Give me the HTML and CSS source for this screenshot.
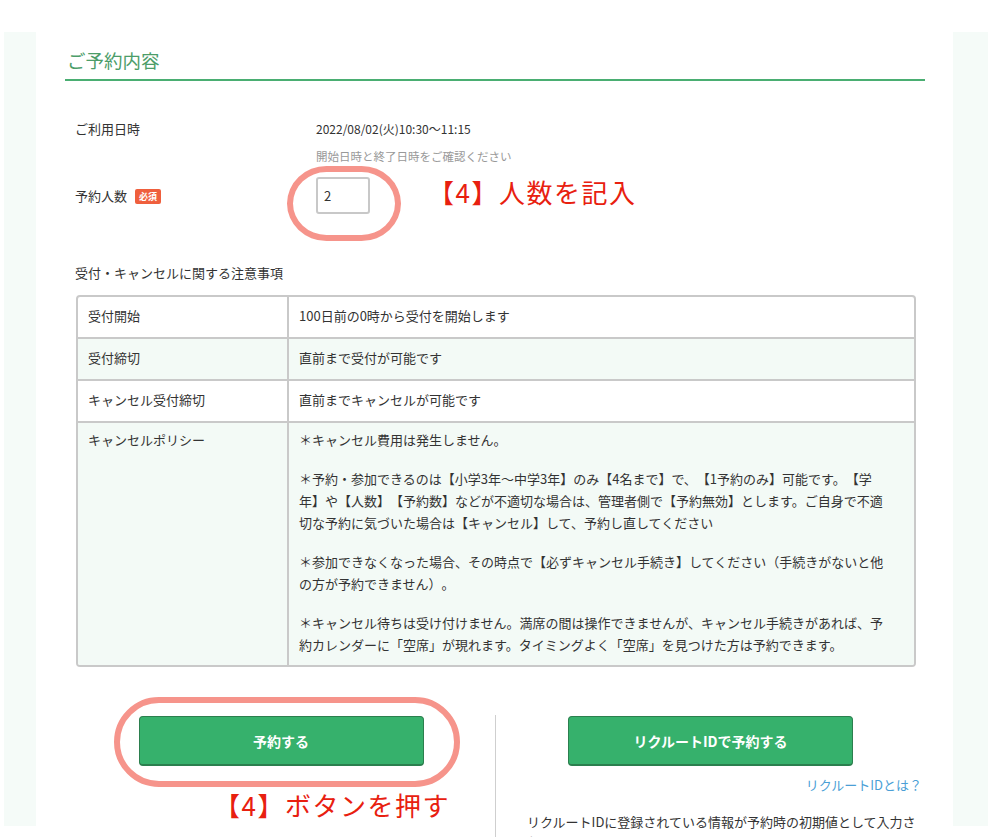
FILE: index.html
```html
<!DOCTYPE html>
<html lang="ja">
<head>
    <meta charset="UTF-8">
    <meta name="viewport" content="width=device-width, initial-scale=1.0">
    <title>ご予約内容</title>
    <link rel="stylesheet" href="styles.css">
</head>
<body>
    <div class="page">
        <div class="side"></div>
        <main class="main">
            <h2 class="heading">ご予約内容</h2>
            <div class="form">
                <div class="row row-date">
                    <div class="label">ご利用日時</div>
                    <div class="value">
                        <div class="date">2022/08/02(火)10:30〜11:15</div>
                        <div class="hint">開始日時と終了日時をご確認ください</div>
                    </div>
                </div>
                <div class="row row-count">
                    <div class="label">予約人数<span class="badge">必須</span></div>
                    <div class="value"><input class="count" type="text" value="2"></div>
                </div>
                <h3 class="notes-title">受付・キャンセルに関する注意事項</h3>
                <table class="notes">
                    <tr>
                        <td class="notes-label">受付開始</td>
                        <td>100日前の0時から受付を開始します</td>
                    </tr>
                    <tr class="alt">
                        <td class="notes-label">受付締切</td>
                        <td>直前まで受付が可能です</td>
                    </tr>
                    <tr>
                        <td class="notes-label">キャンセル受付締切</td>
                        <td>直前までキャンセルが可能です</td>
                    </tr>
                    <tr class="alt policy">
                        <td class="notes-label">キャンセルポリシー</td>
                        <td>
                            <p>＊キャンセル費用は発生しません。</p>
                            <p>＊予約・参加できるのは【小学3年〜中学3年】のみ【4名まで】で、【1予約のみ】可能です。【学<br>年】や【人数】【予約数】などが不適切な場合は、管理者側で【予約無効】とします。ご自身で不適<br>切な予約に気づいた場合は【キャンセル】して、予約し直してください</p>
                            <p>＊参加できなくなった場合、その時点で【必ずキャンセル手続き】してください（手続きがないと他<br>の方が予約できません）。</p>
                            <p>＊キャンセル待ちは受け付けません。満席の間は操作できませんが、キャンセル手続きがあれば、予<br>約カレンダーに「空席」が現れます。タイミングよく「空席」を見つけた方は予約できます。</p>
                        </td>
                    </tr>
                </table>
            </div>
            <div class="actions">
                <div class="action">
                    <button class="btn" type="button">予約する</button>
                </div>
                <div class="action action-id">
                    <button class="btn" type="button">リクルートIDで予約する</button>
                    <a class="what" href="#">リクルートIDとは？</a>
                    <p class="id-note">リクルートIDに登録されている情報が予約時の初期値として入力されます。</p>
                </div>
            </div>

            <!-- 説明用の書き込み -->
            <div class="mark mark-count"></div>
            <div class="memo memo-count">【4】人数を記入</div>
            <div class="mark mark-btn"></div>
            <div class="memo memo-btn">【4】ボタンを押す</div>
        </main>
        <div class="side side-right"></div>
    </div>
</body>
</html>
```

FILE: styles.css
```css
body {
    margin: 0;
    overflow: hidden;
    height: 100vh;
    background: #fff;
    font-family: "Noto Sans CJK JP", "Noto Sans", sans-serif;
    font-size: 13px;
    color: #333;
    text-spacing-trim: space-all;
}
.page {
    display: flex;
    align-items: flex-start;
    padding: 32px 0 0 4px;
}
.side {
    width: 32px;
    height: 794px;
    background-color: #f5fbf8;
}
.side-right {
    width: 35px;
}
.main {
    position: relative;
    width: 917px;
    box-sizing: border-box;
    padding: 0 28px 0 29px;
}

/* 見出し */
.heading {
    margin: 0;
    padding: 15px 0 6px 2px;
    font-size: 18.5px;
    font-weight: normal;
    line-height: 26px;
    color: #4c9d69;
    border-bottom: 2px solid #4aae72;
}

/* フォーム */
.form {
    padding: 0 10px;
    margin-top: 38px;
}
.row {
    display: flex;
}
.row .label {
    width: 241px;
    flex-shrink: 0;
    line-height: 20px;
}
.row-count {
    margin-top: 13px;
    align-items: center;
}
.date {
    font-size: 12px;
    line-height: 20px;
}
.hint {
    margin-top: 9px;
    font-size: 11.5px;
    line-height: 16px;
    color: #999;
}
.badge {
    display: inline-block;
    margin-left: 8px;
    padding: 0 4px;
    height: 15px;
    line-height: 15px;
    vertical-align: 1px;
    font-size: 9px;
    font-weight: bold;
    color: #fff;
    background-color: #ef5f3d;
    border-radius: 2px;
}
.count {
    width: 54px;
    height: 37px;
    box-sizing: border-box;
    padding: 0 6px;
    font: inherit;
    color: #333;
    border: 2px solid #c8c8c8;
    border-radius: 3px;
}
.notes-title {
    margin: 49px 0 12px;
    font-size: 13px;
    font-weight: normal;
    line-height: 20px;
}

/* 注意事項テーブル */
.notes {
    width: 840px;
    margin-left: 1px;
    border-collapse: separate;
    border-spacing: 0;
    border: 2px solid #c9c9c9;
    border-radius: 4px;
    overflow: hidden;
}
.notes td {
    padding: 8px 10px 10px;
    line-height: 22px;
    vertical-align: top;
    border-top: 2px solid #c9c9c9;
}
.notes tr:first-child td {
    border-top: none;
}
.notes .notes-label {
    width: 189px;
    border-right: 2px solid #c9c9c9;
}
.notes .alt td {
    background-color: #f3faf6;
}
.notes .policy td {
    padding-top: 6px;
    padding-bottom: 9px;
}
.notes p {
    margin: 0 0 17px;
}
.notes p:last-child {
    margin-bottom: 0;
}

/* ボタン */
.actions {
    display: flex;
    margin-top: 48px;
}
.action {
    flex: 0 0 430px;
    box-sizing: border-box;
    display: flex;
    flex-direction: column;
    align-items: center;
    padding-top: 1px;
}
.action-id {
    border-left: 1px solid #cfcfcf;
    padding: 1px 3px 0 31px;
    height: 140px;
}
.btn {
    width: 285px;
    height: 50px;
    font: inherit;
    font-size: 14px;
    font-weight: bold;
    color: #fff;
    background-color: #36b16c;
    border: 1px solid #2b7f4e;
    border-bottom-width: 2px;
    border-radius: 4px;
}
.action:first-child .btn {
    margin-left: 2px;
}
.action-id .btn {
    margin-left: -28px;
}
.what {
    align-self: flex-end;
    margin-top: 9px;
    line-height: 20px;
    color: #4b9fd6;
    text-decoration: none;
}
.id-note {
    margin: 17px 0 0;
    line-height: 20px;
}

/* 書き込み */
.mark {
    position: absolute;
    box-sizing: border-box;
    border: 6px solid #f6948b;
}
.mark-count {
    left: 251px;
    top: 134px;
    width: 114px;
    height: 75px;
    border-radius: 40px / 38px;
}
.mark-btn {
    left: 78px;
    top: 665px;
    width: 346px;
    height: 90px;
    border-radius: 46px;
}
.memo {
    position: absolute;
    font-size: 26px;
    line-height: 30px;
    letter-spacing: 1.5px;
    color: #e8200f;
    white-space: nowrap;
}
.memo-count {
    left: 392px;
    top: 145px;
}
.memo-btn {
    left: 178px;
    top: 758px;
}
```
